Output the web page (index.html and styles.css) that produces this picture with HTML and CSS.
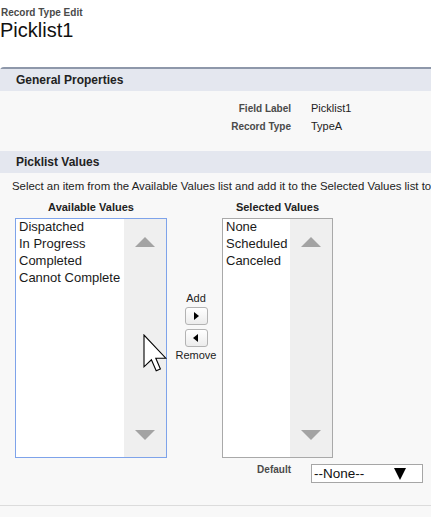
FILE: index.html
```html
<!DOCTYPE html>
<html>
<head>
<meta charset="utf-8">
<title>Record Type Edit</title>
<link rel="stylesheet" href="styles.css">
</head>
<body>
<div class="page">
  <div class="title">
    <div class="crumb">Record Type Edit</div>
    <h1 class="name">Picklist1</h1>
  </div>
  <div class="panel">
    <div class="band">General Properties</div>
    <div class="props">
      <div class="prop"><span class="lbl">Field Label</span><span class="val">Picklist1</span></div>
      <div class="prop"><span class="lbl">Record Type</span><span class="val">TypeA</span></div>
    </div>
    <div class="band">Picklist Values</div>
    <div class="pv">
      <p class="hint">Select an item from the Available Values list and add it to the Selected Values list to</p>
      <div class="duel">
        <div class="col col-avail">
          <div class="colhead">Available Values</div>
          <div class="listbox focus">
            <ul class="items">
              <li>Dispatched</li>
              <li>In Progress</li>
              <li>Completed</li>
              <li>Cannot Complete</li>
            </ul>
            <div class="sbar"><span class="up"></span><span class="down"></span></div>
          </div>
        </div>
        <div class="mover">
          <span class="mvlabel">Add</span>
          <button class="mv" type="button"><span class="tri-r"></span></button>
          <button class="mv mv2" type="button"><span class="tri-l"></span></button>
          <span class="mvlabel">Remove</span>
        </div>
        <div class="col col-sel">
          <div class="colhead">Selected Values</div>
          <div class="listbox">
            <ul class="items">
              <li>None</li>
              <li>Scheduled</li>
              <li>Canceled</li>
            </ul>
            <div class="sbar"><span class="up"></span><span class="down"></span></div>
          </div>
        </div>
      </div>
      <div class="default-row">
        <span class="lbl">Default</span>
        <div class="sel"><span>--None--</span><span class="caret"></span></div>
      </div>
    </div>
    <div class="tail"></div>
  </div>
</div>
<svg class="cursor" viewBox="0 0 12 19" width="24" height="38" aria-hidden="true">
  <path d="M0.5 0.5 L0.5 16.4 L4.2 12.9 L6.6 18.4 L8.7 17.5 L6.4 12.1 L11.4 12.1 Z" fill="#fff" stroke="#000" stroke-width="0.55" stroke-linejoin="miter"/>
</svg>
</body>
</html>
```

FILE: styles.css
```css
html, body {
  margin: 0;
  padding: 0;
}
body {
  width: 431px;
  height: 517px;
  overflow: hidden;
  background: #fff;
  font-family: "Liberation Sans", Arial, sans-serif;
  color: #222;
  position: relative;
}
.page {
  width: 431px;
  overflow: hidden;
}
.title {
  padding-top: 7px;
}
.crumb {
  font-size: 10px;
  line-height: 12px;
  font-weight: bold;
  color: #4a4a4a;
  padding-left: 1px;
}
.name {
  margin: 0;
  font-size: 20px;
  line-height: 22px;
  font-weight: normal;
  color: #111;
}
.panel {
  margin-top: 26px;
  border-top: 2px solid #8e98aa;
  border-top-left-radius: 4px;
  background: #f8f8f8;
}
.band {
  height: 22px;
  line-height: 22px;
  padding-left: 16px;
  background: #e4e7ef;
  font-size: 12px;
  font-weight: bold;
  color: #222;
}
.props {
  padding: 8px 0 16px;
}
.prop,
.default-row {
  display: grid;
  grid-template-columns: 291px auto;
  column-gap: 20px;
}
.prop {
  height: 18px;
  align-items: center;
}
.lbl {
  text-align: right;
  font-size: 10px;
  font-weight: bold;
  color: #4a4a4a;
}
.val {
  font-size: 11px;
  color: #222;
}
.pv {
  padding-top: 7px;
  padding-bottom: 22px;
  border-bottom: 1px solid #dcdcdc;
}
.hint {
  margin: 0;
  padding-left: 12px;
  font-size: 11.4px;
  line-height: 12px;
  white-space: nowrap;
  overflow: hidden;
  color: #222;
}
.duel {
  display: flex;
  align-items: flex-start;
  margin-top: 9px;
  padding-left: 15px;
}
.col-avail {
  width: 152px;
}
.col-sel {
  width: 111px;
}
.colhead {
  font-size: 11px;
  line-height: 13px;
  font-weight: bold;
  color: #222;
  text-align: center;
  margin-bottom: 4px;
}
.listbox {
  box-sizing: border-box;
  height: 240px;
  border: 1px solid #a9a9a9;
  background: #fff;
  display: flex;
}
.listbox.focus {
  border-color: #7ea3ea;
}
.items {
  list-style: none;
  margin: -1px 0 0;
  padding: 0 0 0 3px;
  flex: 1;
  font-size: 13px;
  line-height: 17px;
  color: #1a1a1a;
  white-space: nowrap;
}
.sbar {
  width: 42px;
  flex: none;
  background: #efefef;
  display: flex;
  flex-direction: column;
  align-items: center;
  justify-content: space-between;
  padding: 18px 0 17px;
  box-sizing: border-box;
}
.up {
  width: 0;
  height: 0;
  border-left: 10px solid transparent;
  border-right: 10px solid transparent;
  border-bottom: 10px solid #a3a3a3;
}
.down {
  width: 0;
  height: 0;
  border-left: 10px solid transparent;
  border-right: 10px solid transparent;
  border-top: 10px solid #a3a3a3;
}
.mover {
  box-sizing: border-box;
  width: 55px;
  padding-left: 3px;
  margin-top: 91px;
  display: flex;
  flex-direction: column;
  align-items: center;
}
.mvlabel {
  font-size: 11px;
  line-height: 13px;
  color: #222;
}
.mv {
  box-sizing: border-box;
  width: 23px;
  height: 18px;
  margin: 2px 0 0;
  padding: 0;
  border: 1px solid #b3b3b3;
  border-radius: 3px;
  background: linear-gradient(#ffffff, #ececec);
  display: flex;
  align-items: center;
  justify-content: center;
}
.mv2 {
  margin-top: 4px;
  margin-bottom: 2px;
}
.tri-r {
  width: 0;
  height: 0;
  border-top: 4.5px solid transparent;
  border-bottom: 4.5px solid transparent;
  border-left: 5px solid #000;
  margin-left: 1px;
}
.tri-l {
  width: 0;
  height: 0;
  border-top: 4.5px solid transparent;
  border-bottom: 4.5px solid transparent;
  border-right: 5px solid #000;
  margin-right: 1px;
}
.default-row {
  margin-top: 6px;
  align-items: start;
}
.default-row .lbl {
  line-height: 11px;
}
.sel {
  box-sizing: border-box;
  width: 112px;
  height: 19px;
  border: 1px solid #a6a6a6;
  background: #fff;
  display: flex;
  align-items: center;
  justify-content: space-between;
  padding: 0 16px 0 2px;
  font-size: 13.5px;
  color: #111;
}
.caret {
  width: 0;
  height: 0;
  border-left: 6.5px solid transparent;
  border-right: 6.5px solid transparent;
  border-top: 12px solid #000;
}
.tail {
  height: 30px;
}
.cursor {
  position: absolute;
  left: 143px;
  top: 334px;
}
```
